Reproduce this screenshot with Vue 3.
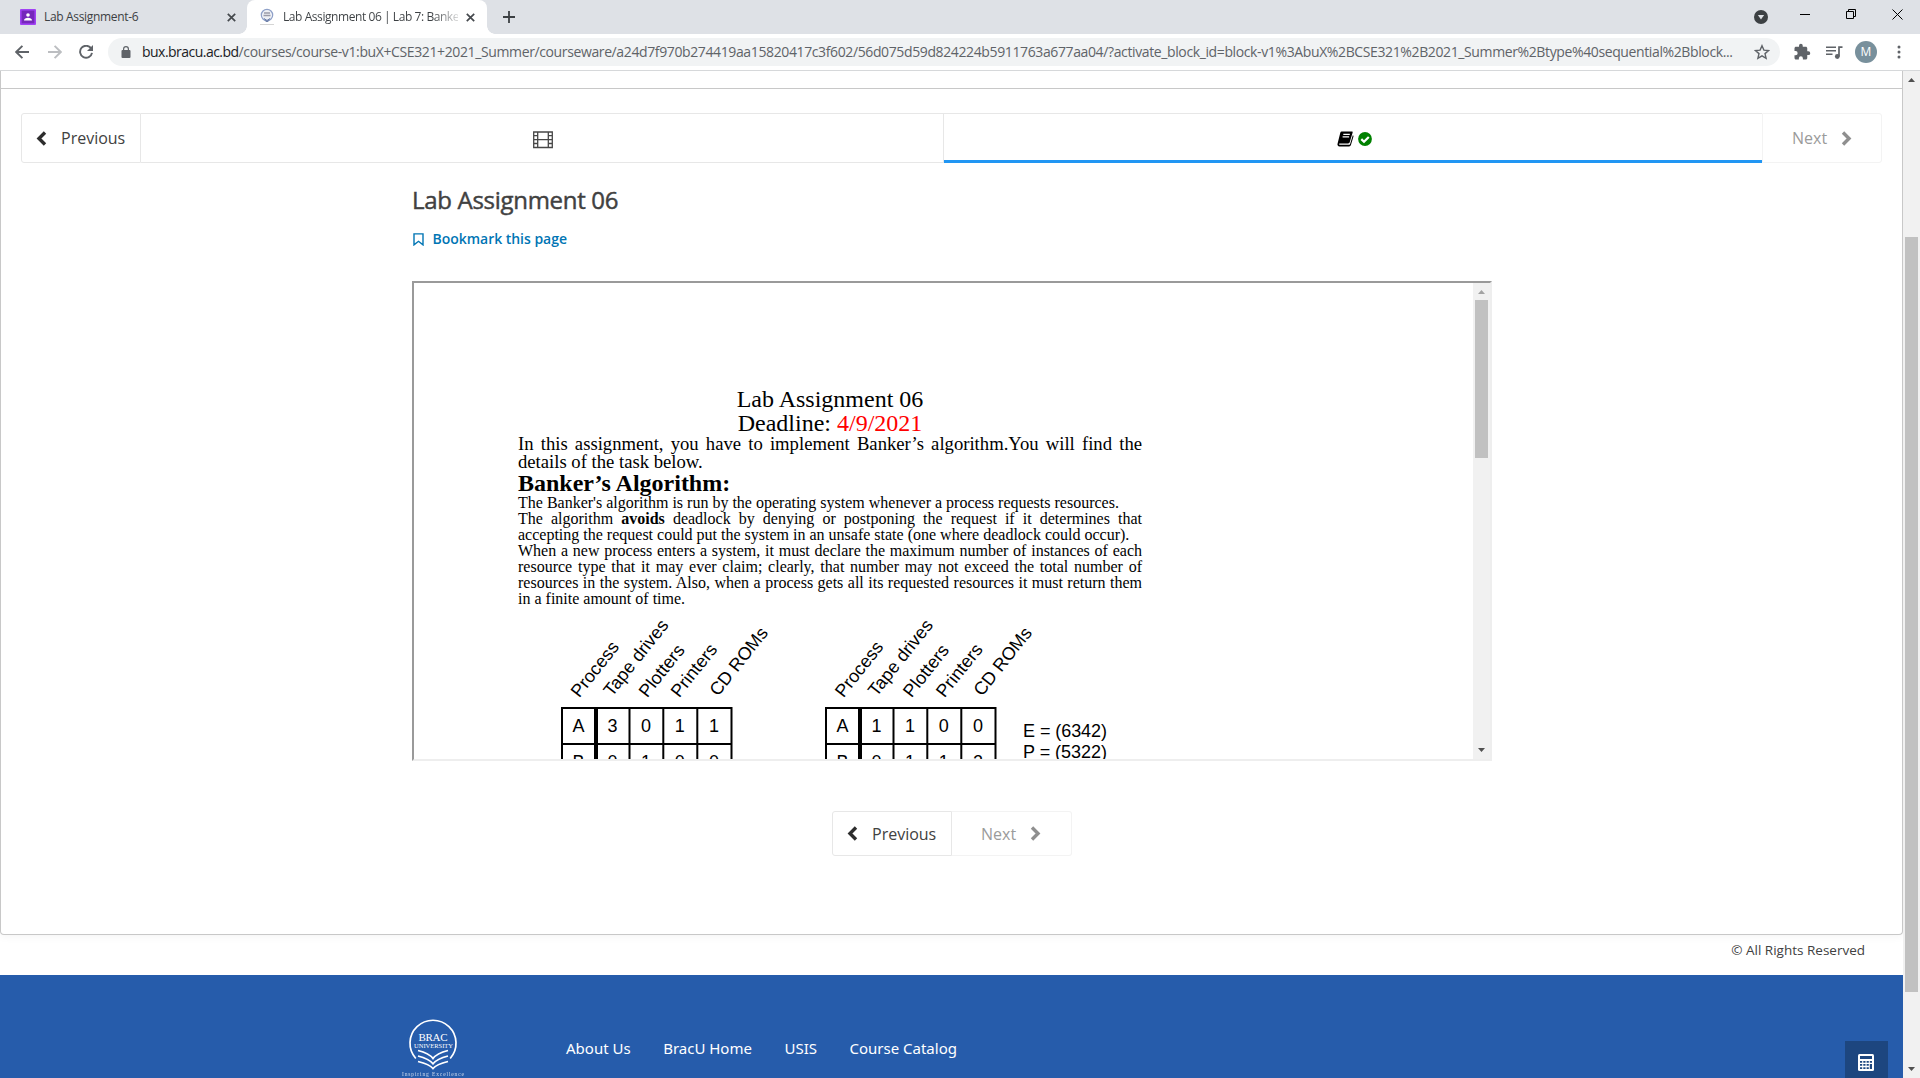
<script setup>
const urlHost = 'bux.bracu.ac.bd'
const urlPath =
  '/courses/course-v1:buX+CSE321+2021_Summer/courseware/a24d7f970b274419aa15820417c3f602/56d075d59d824224b5911763a677aa04/?activate_block_id=block-v1%3AbuX%2BCSE321%2B2021_Summer%2Btype%40sequential%2Bblock...'

const footerLinks = ['About Us', 'BracU Home', 'USIS', 'Course Catalog']

// Resource matrices, in coordinates of the figure (origin: top left of the drawing)
const matrices = [
  {
    x: 43,
    labels: [
      { t: 'Process', x: 61.2, y: 83.5, len: 65.5 },
      { t: 'Tape drives', x: 94, y: 82.5, len: 92 },
      { t: 'Plotters', x: 129.2, y: 83.5, len: 61.5 },
      { t: 'Printers', x: 161.2, y: 83.5, len: 62.5 },
      { t: 'CD ROMs', x: 200, y: 82, len: 81.5 }
    ],
    rows: [['A', 3, 0, 1, 1], ['B', 0, 1, 0, 0]]
  },
  {
    x: 307,
    labels: [
      { t: 'Process', x: 325.4, y: 83.5, len: 65.5 },
      { t: 'Tape drives', x: 358.5, y: 82.5, len: 92 },
      { t: 'Plotters', x: 393.6, y: 83.5, len: 61.5 },
      { t: 'Printers', x: 426.6, y: 83.5, len: 62.5 },
      { t: 'CD ROMs', x: 464, y: 82, len: 81.5 }
    ],
    rows: [['A', 1, 1, 0, 0], ['B', 0, 1, 1, 2]]
  }
]
const cellX = [17.5, 51.5, 85, 118.8, 153]
</script>

<template>
  <div class="window">
    <header class="tabstrip">
      <div class="tab idle">
        <svg class="fav" width="16" height="16" viewBox="0 0 16 16">
          <rect width="16" height="16" rx="1" fill="#a142f4" />
          <rect x="1.6" y="1.6" width="12.8" height="12.8" fill="#7627bb" />
          <circle cx="8" cy="6" r="1.8" fill="#fff" />
          <path d="M4 11.6c0-2 2-2.9 4-2.9s4 .9 4 2.9z" fill="#fff" />
        </svg>
        <span class="tab-title">Lab Assignment-6</span>
        <svg class="x" width="9" height="9" viewBox="0 0 9 9"><path d="M.8.8l7.4 7.4M8.2.8L.8 8.2" /></svg>
      </div>
      <div class="tab active">
        <svg class="fav" width="16" height="18" viewBox="0 0 16 18">
          <circle cx="8" cy="7" r="5.7" fill="#eef0f5" stroke="#8ea0c8" stroke-width="1.2" />
          <path d="M5 5h6M4.5 7.5h7" stroke="#9a9aa8" stroke-width="1.6" />
          <path d="M5 10.5l3 2 3-2M6 12.5l2 1.3 2-1.3" fill="none" stroke="#6d7fa8" />
          <path d="M1 16.5h14" stroke="#d5d5d5" />
        </svg>
        <span class="tab-title fade">Lab Assignment 06 | Lab 7: Banke</span>
        <svg class="x" width="9" height="9" viewBox="0 0 9 9"><path d="M.8.8l7.4 7.4M8.2.8L.8 8.2" /></svg>
      </div>
      <svg class="plus" width="12" height="12" viewBox="0 0 12 12"><path d="M6 0v12M0 6h12" /></svg>
      <div class="controls">
        <svg width="14" height="14" viewBox="0 0 14 14">
          <circle cx="7" cy="7" r="7" fill="#3c4043" /><path d="M3.9 5h6.2L7 9.6z" fill="#dee1e6" />
        </svg>
        <svg class="min" width="10" height="10" viewBox="0 0 10 10"><path d="M0 5.5h10" stroke="#000" /></svg>
        <svg class="rest" width="10" height="10" viewBox="0 0 10 10">
          <path d="M.5 2.5h7v7h-7zM2.5 2.5v-2h7v7h-2" fill="none" stroke="#000" />
        </svg>
        <svg class="close" width="11" height="11" viewBox="0 0 11 11"><path d="M.5.5l10 10M10.5.5l-10 10" stroke="#000" /></svg>
      </div>
    </header>

    <div class="toolbar">
      <svg class="nav-i" width="14" height="14" viewBox="0 0 14 14"><path d="M14 7H1.5M7.4.8L1.2 7l6.2 6.2" stroke="#5f6368" /></svg>
      <svg class="nav-i fwd" width="14" height="14" viewBox="0 0 14 14"><path d="M0 7h12.5M6.6.8L12.8 7l-6.2 6.2" stroke="#bcbec1" /></svg>
      <svg class="nav-i rel" width="14" height="14" viewBox="0 0 14 14">
        <path d="M12.2 3.6A6 6 0 1 0 13 7.9" stroke="#5f6368" /><path d="M14 0v6H8z" fill="#5f6368" stroke="none" />
      </svg>
      <div class="omnibox">
        <svg width="10" height="12" viewBox="0 0 10 12">
          <rect x=".5" y="4" width="9" height="8" rx="1" fill="#5f6368" />
          <path d="M2.6 4.5V3a2.4 2.4 0 0 1 4.8 0v1.5" fill="none" stroke="#5f6368" stroke-width="1.2" />
        </svg>
        <div class="url"><span class="host">{{ urlHost }}</span><span class="path">{{ urlPath }}</span></div>
        <svg class="star" width="16" height="16" viewBox="0 0 16 16">
          <path d="M8 1.7l1.9 4.4 4.7.4-3.6 3.1 1.1 4.7L8 11.8l-4.1 2.5L5 9.6 1.4 6.5l4.7-.4z" fill="none" stroke="#5f6368" stroke-width="1.4" />
        </svg>
      </div>
      <svg class="puzzle" width="18" height="18" viewBox="0 0 24 24">
        <path fill="#5f6368" d="M20.5 11H19V7c0-1.100-.9-2-2-2h-4V3.500a2.500 2.500 0 0 0-5 0V5H4c-1.100 0-2 .9-2 2v3.800h1.500a2.700 2.700 0 0 1 0 5.400H2V20c0 1.100.9 2 2 2h3.800v-1.500a2.700 2.700 0 0 1 5.400 0V22H17c1.100 0 2-.9 2-2v-4h1.500a2.500 2.500 0 0 0 0-5z" />
      </svg>
      <svg class="music" width="17" height="13" viewBox="0 0 17 13">
        <path d="M0 1.300h10M0 4.800h10M0 8.300h6.500" stroke="#5f6368" stroke-width="1.500" />
        <path d="M13 10.500V1.200h3.500" fill="none" stroke="#5f6368" stroke-width="1.700" />
        <circle cx="11.300" cy="10.500" r="2.400" fill="#5f6368" />
      </svg>
      <div class="avatar">M</div>
      <svg class="dots" width="4" height="14" viewBox="0 0 4 14" fill="#5f6368">
        <circle cx="2" cy="2" r="1.500" /><circle cx="2" cy="7" r="1.500" /><circle cx="2" cy="12" r="1.500" />
      </svg>
    </div>

    <div class="viewport">
      <div class="page">
        <main class="course">
          <div class="crumb-row"></div>
          <nav class="sequence">
            <button class="seq-btn prev">
              <svg width="11" height="15" viewBox="0 0 11 15"><path d="M9 1.500L3 7.500l6 6" /></svg>
              <span>Previous</span>
            </button>
            <div class="seq-tab one">
              <svg width="20" height="18" viewBox="0 0 20 18">
                <path d="M.7 1h18.600v15.500H.7zM4.700 1v15.500M15.300 1v15.500M4.700 8.700h10.600M.7 4.700h4M.7 8.700h4M.7 12.500h4M15.300 4.700h4M15.300 8.700h4M15.300 12.500h4" fill="none" stroke="#474747" stroke-width="1.300" />
              </svg>
            </div>
            <div class="seq-tab two">
              <svg width="17" height="16" viewBox="0 0 17 16">
                <path d="M4.600.5h10.200c.8 0 1 .6.8 1.200l-2.900 9.600c-.2.700-.8 1.200-1.500 1.200H2.600c-.8 0-.9 1.300.3 1.300h9c.5 0 1-.4 1.200-.9l2.700-8.700c.8.4.8 1 .6 1.600l-2.500 8.300c-.3.800-1 1.400-1.800 1.400H2.500C1 15.500 0 14 .6 12.600L3.300 1.700C3.500.9 4 .5 4.600.5z" fill="#000" />
                <path d="M6.300 3.400h6.500M5.600 5.900h6.500" stroke="#fff" stroke-width="1.100" />
              </svg>
              <svg width="14" height="14" viewBox="0 0 14 14">
                <circle cx="7" cy="7" r="6.900" fill="#008100" />
                <path d="M3.300 7.100l2.700 2.700 4.800-4.900" fill="none" stroke="#fff" stroke-width="2.200" />
              </svg>
            </div>
            <button class="seq-btn next">
              <span>Next</span>
              <svg width="11" height="15" viewBox="0 0 11 15"><path d="M2 1.500l6 6-6 6" /></svg>
            </button>
          </nav>

          <section class="unit">
            <h1>Lab Assignment 06</h1>
            <a class="bookmark">
              <svg width="11" height="13" viewBox="0 0 11 13"><path d="M1 .9h9v11L5.500 8.300 1 11.900z" fill="none" stroke="#0075b4" stroke-width="1.400" /></svg>
              <span>Bookmark this page</span>
            </a>

            <div class="frame">
              <article class="doc">
                <p class="big">Lab Assignment 06</p>
                <p class="big">Deadline: <span class="red">4/9/2021</span></p>
                <p class="lead">In this assignment, you have to implement Banker’s algorithm.You will find the details of the task below.</p>
                <h2>Banker’s Algorithm:</h2>
                <p class="body">The Banker's algorithm is run by the operating system whenever a process requests resources.</p>
                <p class="body">The algorithm <b>avoids</b> deadlock by denying or postponing the request if it determines that accepting the request could put the system in an unsafe state (one where deadlock could occur).</p>
                <p class="body">When a new process enters a system, it must declare the maximum number of instances of each resource type that it may ever claim; clearly, that number may not exceed the total number of resources in the system. Also, when a process gets all its requested resources it must return them in a finite amount of time.</p>
                <svg class="figure" width="624" height="160" viewBox="0 0 624 160">
                  <g v-for="m in matrices" :key="m.x">
                    <text v-for="l in m.labels" :key="l.t" :textLength="l.len" :transform="`translate(${l.x} ${l.y}) rotate(-51.5)`">{{ l.t }}</text>
                    <g :transform="`translate(${m.x} 92)`">
                      <path d="M1 80V1h169.500v79M0 37h171.500M68.500 1v79M102.300 1v79M136.300 1v79" fill="none" stroke="#000" stroke-width="2" />
                      <path d="M35 0v80" stroke="#000" stroke-width="4" />
                      <template v-for="(r, ri) in m.rows" :key="ri">
                        <text v-for="(c, ci) in r" :key="ci" :x="cellX[ci]" :y="25.300 + ri * 35.500" text-anchor="middle">{{ c }}</text>
                      </template>
                    </g>
                  </g>
                  <text x="505" y="121.800" textLength="84">E = (6342)</text>
                  <text x="505" y="142.500" textLength="84">P = (5322)</text>
                </svg>
              </article>
              <div class="bar inner">
                <svg class="arrow" width="7" height="4" viewBox="0 0 7 4"><path d="M3.500 0L7 4H0z" fill="#a3a3a3" /></svg>
                <i class="thumb"></i>
                <svg class="arrow down" width="7" height="4" viewBox="0 0 7 4"><path d="M3.500 4L7 0H0z" fill="#505050" /></svg>
              </div>
            </div>

            <div class="pager">
              <button class="seq-btn prev">
                <svg width="11" height="15" viewBox="0 0 11 15"><path d="M9 1.500L3 7.500l6 6" /></svg>
                <span>Previous</span>
              </button>
              <button class="seq-btn next">
                <span>Next</span>
                <svg width="11" height="15" viewBox="0 0 11 15"><path d="M2 1.500l6 6-6 6" /></svg>
              </button>
            </div>
          </section>
        </main>

        <div class="rights">© All Rights Reserved</div>

        <footer>
          <svg class="logo" width="66" height="64" viewBox="0 0 66 64">
            <g fill="none" stroke="#fff">
              <path d="M15.800 43.500A23 23 0 1 1 50.200 43.500" stroke-width="1.700" />
              <path d="M18 35.500c6 1.500 12 4 15 8 3-4 9-6.500 15-8" stroke-width="1.800" />
              <path d="M18 41c6 1.500 12 4 15 7.800 3-3.800 9-6.300 15-7.800" stroke-width="1.800" />
              <path d="M18 46.500c6 1.500 12 3.500 15 7 3-3.500 9-5.500 15-7" stroke-width="1.800" />
            </g>
            <g fill="#fff" font-family="'Liberation Serif', serif">
              <text x="18.500" y="25.500" font-size="11" textLength="29">BRAC</text>
              <text x="14" y="33" font-size="7" textLength="39" lengthAdjust="spacingAndGlyphs">UNIVERSITY</text>
              <text x="2" y="61" font-size="5.500" textLength="62" opacity=".75">Inspiring Excellence</text>
            </g>
          </svg>
          <a v-for="l in footerLinks" :key="l">{{ l }}</a>
          <div class="calc">
            <svg width="16" height="17" viewBox="0 0 16 17">
              <rect width="16" height="17" rx="1.500" fill="#fff" />
              <path d="M2 2h12v3H2zM2 7h2.200v1.800H2zM5.300 7h2.200v1.800H5.300zM8.600 7h2.200v1.800H8.600zM11.800 7H14v1.800h-2.200zM2 10h2.200v1.800H2zM5.300 10h2.200v1.800H5.300zM8.600 10h2.200v1.800H8.600zM11.800 10H14v5h-2.200zM2 13.200h2.200V15H2zM5.300 13.200h2.200V15H5.300zM8.600 13.200h2.200V15H8.600z" fill="#1d467f" />
            </svg>
          </div>
        </footer>
      </div>

      <div class="bar outer">
        <svg class="arrow" width="7" height="4" viewBox="0 0 7 4"><path d="M3.500 0L7 4H0z" fill="#505050" /></svg>
        <i class="thumb"></i>
        <svg class="arrow down" width="7" height="4" viewBox="0 0 7 4"><path d="M3.500 4L7 0H0z" fill="#505050" /></svg>
      </div>
    </div>
  </div>
</template>

<style>
body {
  margin: 0;
  overflow: hidden;
}
</style>

<style scoped>
* {
  box-sizing: border-box;
}
svg {
  display: block;
  flex: none;
}
.window {
  width: 1920px;
  height: 1078px;
  display: flex;
  flex-direction: column;
  overflow: hidden;
  background: #fff;
  font-family: 'Open Sans', 'Noto Sans', sans-serif;
}

/* Browser chrome */
.tabstrip {
  flex: none;
  height: 34px;
  display: flex;
  align-items: center;
  background: #dee1e6;
}
.tab {
  height: 34px;
  display: flex;
  align-items: center;
  font-size: 12px;
  color: #3c4043;
}
.tab.idle {
  width: 247px;
  padding-left: 20px;
}
.tab.active {
  position: relative;
  width: 240px;
  padding-left: 12px;
  background: #fff;
  border-radius: 8px 8px 0 0;
}
.tab.active::before,
.tab.active::after {
  content: '';
  position: absolute;
  bottom: 0;
  width: 8px;
  height: 8px;
}
.tab.active::before {
  left: -8px;
  background: radial-gradient(circle at 0 0, transparent 7.5px, #fff 8px);
}
.tab.active::after {
  right: -8px;
  background: radial-gradient(circle at 100% 0, transparent 7.5px, #fff 8px);
}
.tab-title {
  margin-left: 8px;
  width: 175px;
  line-height: 20px;
  letter-spacing: -0.330px;
  white-space: nowrap;
}
.tab-title.fade {
  letter-spacing: -0.430px;
  color: transparent;
  background: linear-gradient(90deg, #3c4043 150px, rgba(60, 64, 67, 0.15) 176px);
  -webkit-background-clip: text;
  background-clip: text;
}
.x {
  margin-left: 8px;
  fill: none;
  stroke: #45494d;
  stroke-width: 1.700;
}
.plus {
  margin-left: 16px;
  fill: none;
  stroke: #3c4043;
  stroke-width: 1.800;
}
.controls {
  margin-left: auto;
  margin-right: 17px;
  display: flex;
}
.min {
  margin: -1px 0 0 32px;
}
.rest {
  margin: -1px 0 0 36px;
}
.close {
  margin: -1px 0 0 36px;
}
.toolbar {
  flex: none;
  height: 37px;
  padding-left: 15px;
  display: flex;
  align-items: center;
  border-bottom: 1px solid #d6d8da;
}
.nav-i {
  fill: none;
  stroke-width: 1.900;
}
.fwd {
  margin-left: 19px;
}
.rel {
  margin-left: 17px;
}
.omnibox {
  width: 1672px;
  height: 28px;
  margin-left: 15px;
  padding: 0 10px 0 13px;
  display: flex;
  align-items: center;
  border-radius: 14px;
  background: #f1f3f4;
}
.url {
  width: 1604px;
  margin-left: 11px;
  font-size: 14px;
  line-height: 20px;
  white-space: nowrap;
}
.host {
  color: #202124;
  letter-spacing: -0.530px;
}
.path {
  color: #5f6368;
  letter-spacing: -0.380px;
}
.star {
  margin-left: auto;
}
.puzzle {
  margin-left: 13px;
}
.music {
  margin-left: 15px;
}
.avatar {
  width: 22px;
  height: 22px;
  margin-left: 12px;
  border-radius: 50%;
  background: #78909c;
  color: #fff;
  font-size: 12px;
  line-height: 22px;
  text-align: center;
}
.dots {
  margin-left: 20px;
}

/* Page */
.viewport {
  flex: 1;
  min-height: 0;
  display: flex;
}
.page {
  width: 1903px;
  display: flex;
  flex-direction: column;
  overflow: hidden;
}
.course {
  flex: none;
  height: 864px;
  border: 1px solid #c8c8c8;
  border-top: 0;
  border-radius: 0 0 4px 4px;
  box-shadow: 0 1px 10px rgba(0, 0, 0, 0.05);
}
.crumb-row {
  height: 18px;
  border-bottom: 1px solid #c8c8c8;
}
.sequence {
  display: flex;
  height: 50px;
  margin: 24px 20px 0;
}
.seq-btn {
  flex: none;
  display: flex;
  align-items: center;
  width: 120px;
  padding: 0;
  border: 1px solid #e7e7e7;
  background: #fff;
  font: 16px/24px 'Open Sans', sans-serif;
  color: #414141;
}
.seq-btn svg {
  fill: none;
  stroke: #2d2d2d;
  stroke-width: 3.400;
}
.seq-btn.prev {
  padding-left: 14px;
  border-radius: 3px 0 0 3px;
}
.seq-btn.prev span {
  margin-left: 14px;
}
.seq-btn.next {
  padding-left: 29px;
  border-color: #f3f3f3;
  border-left: 0;
  border-radius: 0 3px 3px 0;
  color: #9b9b9b;
}
.seq-btn.next svg {
  margin-left: 14px;
  stroke: #8f8f8f;
}
.seq-tab {
  flex: none;
  display: flex;
  align-items: center;
  justify-content: center;
  border-top: 1px solid #e7e7e7;
  border-bottom: 1px solid #e7e7e7;
}
.seq-tab.one {
  width: 803px;
  border-right: 1px solid #e7e7e7;
  padding: 3px 0 0 2px;
}
.seq-tab.two {
  width: 818px;
  gap: 4px;
  border-bottom: 3px solid #2196f3;
  padding: 3px 0 0 2px;
}
.sequence .seq-btn.next {
  border-left: 1px solid #f3f3f3;
}
.unit {
  width: 1080px;
  margin: 22px 0 0 411px;
}
h1 {
  margin: 0;
  font-size: 24px;
  line-height: 30px;
  font-weight: 400;
  letter-spacing: -0.300px;
  color: #414141;
  -webkit-text-stroke: 0.450px #414141;
}
.bookmark {
  display: flex;
  align-items: center;
  gap: 8.500px;
  height: 20px;
  margin: 14px 0 32px;
  padding-left: 1px;
  font-size: 14px;
  line-height: 20px;
  font-weight: 600;
  letter-spacing: -0.030px;
  color: #0075b4;
}
.frame {
  display: flex;
  height: 480px;
  border: 2px solid;
  border-color: #9a9a9a #eee #eee #9a9a9a;
  overflow: hidden;
}
.doc {
  width: 624px;
  margin-left: 104px;
  padding-top: 104px;
  font-family: 'Liberation Serif', serif;
  color: #000;
}
.doc p,
.doc h2 {
  margin: 0;
}
.doc .big {
  font-size: 24px;
  line-height: 24px;
  text-align: center;
}
.red {
  color: #f00;
}
.doc .lead {
  font-size: 18.670px;
  line-height: 18px;
  text-align: justify;
}
.doc h2 {
  font-size: 24px;
  line-height: 24px;
}
.doc .body {
  font-size: 16px;
  line-height: 16px;
  text-align: justify;
}
.figure {
  margin-top: 8px;
  font-family: 'Liberation Sans', sans-serif;
  font-size: 18px;
}
.bar {
  display: flex;
  flex-direction: column;
  align-items: center;
  width: 17px;
  background: #f1f1f1;
}
.thumb {
  display: block;
  width: 13px;
  background: #c1c1c1;
}
.inner {
  margin-left: auto;
}
.inner .arrow {
  margin-top: 7px;
}
.inner .thumb {
  margin-top: 6px;
  height: 158px;
}
.outer .arrow {
  margin-top: 7px;
}
.outer .thumb {
  margin-top: 155px;
  height: 755px;
}
.bar .arrow.down {
  margin-top: auto;
  margin-bottom: 7px;
}
.pager {
  display: flex;
  height: 45px;
  width: 240px;
  margin: 50px auto 0;
}
.rights {
  flex: none;
  height: 40px;
  padding: 5px 38px 0 0;
  text-align: right;
  font-size: 13.500px;
  line-height: 20px;
  color: #414141;
}
footer {
  position: relative;
  flex: 1;
  display: flex;
  align-items: flex-start;
  padding-left: 400px;
  background: #265cab;
  font-family: 'Noto Sans', sans-serif;
  font-size: 15px;
  line-height: 24px;
  color: #fff;
}
.logo {
  margin: 40px 100px 0 0;
}
footer a {
  margin: 61px 32.500px 0 0;
}
.calc {
  position: absolute;
  right: 15px;
  top: 66px;
  width: 43px;
  height: 43px;
  display: flex;
  align-items: center;
  justify-content: center;
  padding-right: 1px;
  background: #1d467f;
}
</style>
